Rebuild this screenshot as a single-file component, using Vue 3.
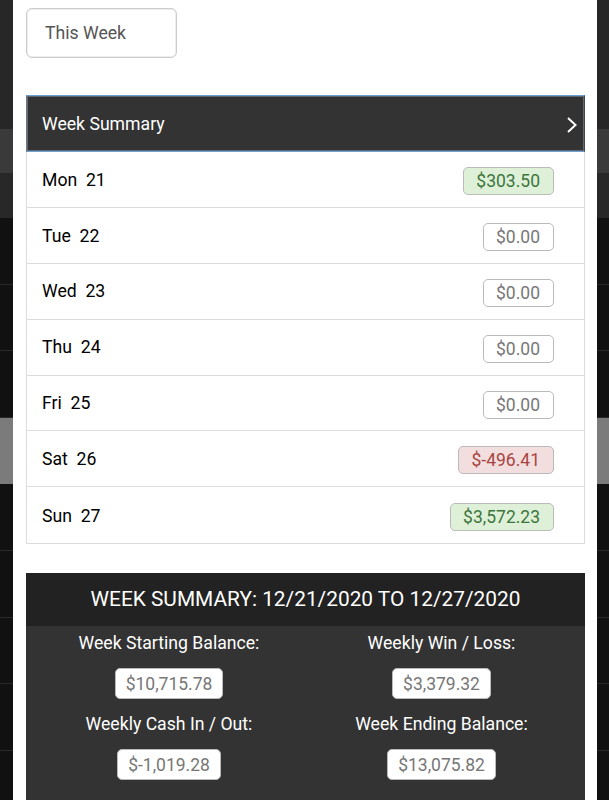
<template>
  <div class="page">
    <div class="backdrop">
      <div v-for="(band, index) in bands" :key="index" class="band" :class="band"></div>
    </div>

    <main class="modal">
      <button class="week-select">This Week</button>

      <section class="days">
        <div class="days-header">
          <span>Week Summary</span>
          <svg class="chevron" width="12" height="18" viewBox="0 0 12 18" fill="none">
            <path d="M2 2L9.5 9L2 16" stroke="#fff" stroke-width="2" />
          </svg>
        </div>
        <div v-for="day in days" :key="day.name" class="day">
          <span class="day-name">{{ day.name }}</span>
          <span class="badge" :class="day.type">{{ day.amount }}</span>
        </div>
      </section>

      <section class="summary">
        <h2 class="summary-title">WEEK SUMMARY: 12/21/2020 TO 12/27/2020</h2>
        <div class="summary-grid">
          <div v-for="item in totals" :key="item.label" class="summary-item">
            <span class="summary-label">{{ item.label }}</span>
            <span class="badge total">{{ item.amount }}</span>
          </div>
        </div>
      </section>
    </main>
  </div>
</template>

<script setup>
const days = [
  { name: 'Mon  21', amount: '$303.50', type: 'win' },
  { name: 'Tue  22', amount: '$0.00' },
  { name: 'Wed  23', amount: '$0.00' },
  { name: 'Thu  24', amount: '$0.00' },
  { name: 'Fri  25', amount: '$0.00' },
  { name: 'Sat  26', amount: '$-496.41', type: 'loss' },
  { name: 'Sun  27', amount: '$3,572.23', type: 'win' }
];

const totals = [
  { label: 'Week Starting Balance:', amount: '$10,715.78' },
  { label: 'Weekly Win / Loss:', amount: '$3,379.32' },
  { label: 'Weekly Cash In / Out:', amount: '$-1,019.28' },
  { label: 'Week Ending Balance:', amount: '$13,075.82' }
];

// Rows of the page behind the modal
const bands = ['top', 'nav', 'sub', 'row', 'row', 'row', 'active', 'row', 'row', 'row', 'row', 'row'];
</script>

<style>
body {
  overflow: hidden;
}
</style>

<style scoped>
.page {
  display: grid;
  height: 800px;
  overflow: hidden;
  font-family: Roboto, sans-serif;
  font-size: 17.65px;
  line-height: 26px;
}

.backdrop,
.modal {
  grid-area: 1 / 1;
  min-height: 0;
}

.backdrop {
  height: 800px;
  overflow: hidden;
  background: #111;
}

.band {
  box-sizing: border-box;
  height: 66.6px;
}

.band.row {
  border-bottom: 1px solid #282828;
}

.band.top {
  height: 129px;
  background: #272727;
}

.band.nav {
  height: 44px;
  background: #3a3a3a;
}

.band.sub {
  height: 45px;
  background: #282828;
}

.band.active {
  background: #7b7b7b;
}

.modal {
  box-sizing: border-box;
  height: 800px;
  margin: 0 12px 0 13px;
  padding: 8px 12px 0 13px;
  overflow: hidden;
  background: #fff;
}

.week-select {
  display: block;
  box-sizing: border-box;
  width: 151px;
  height: 50px;
  padding: 0 0 0 18px;
  border: 1px solid #ccc;
  border-radius: 6px;
  box-shadow: inset 0 0 0 0.5px #ddd;
  background: #fff;
  color: #555;
  font: inherit;
  text-align: left;
}

.days {
  margin: 37px 0 0;
  border: 1px solid #ddd;
  border-top: 0;
  color: #000;
}

.days-header {
  display: flex;
  align-items: center;
  justify-content: space-between;
  box-sizing: border-box;
  height: 57px;
  margin: 0 -1px;
  padding: 0 6px 0 15px;
  border: 1px solid #6ba0d0;
  border-right-color: #444;
  border-left-color: #777;
  box-shadow: inset 0 0 0 1px #5f6a74;
  background: #333;
  color: #fff;
}

.chevron {
  margin-top: 3px;
}

.day {
  display: flex;
  align-items: center;
  justify-content: space-between;
  box-sizing: border-box;
  height: 55.9px;
  padding: 3px 30px 0 15px;
  border-bottom: 1px solid #ddd;
}

.day:last-child {
  border-bottom: 0;
}

.day-name {
  margin-top: -2.5px;
  white-space: pre;
}

.badge {
  box-sizing: border-box;
  height: 28px;
  padding: 0 13px;
  border: 1px solid #bbb;
  border-radius: 5px;
  background: #fff;
  color: #777;
  font-size: 17.5px;
  line-height: 26px;
}

.day .badge {
  padding-left: 12.5px;
}

.badge.win {
  background: #dff0d8;
  color: #3c763d;
}

.badge.loss {
  background: #f2dede;
  color: #a94442;
}

.summary {
  height: 240px;
  margin-top: 29px;
  background: #333;
  color: #fff;
}

.summary-title {
  height: 53px;
  margin: 0;
  background: #222;
  font-size: 20.85px;
  font-weight: 400;
  line-height: 52px;
  text-align: center;
}

.summary-grid {
  display: grid;
  grid-template-columns: 286px 259px;
}

.summary-item {
  display: flex;
  flex-direction: column;
  align-items: center;
  height: 81px;
  padding-top: 4px;
  box-sizing: border-box;
}

.badge.total {
  height: 31px;
  margin-top: 12px;
  padding: 0 10px;
  line-height: 30px;
}
</style>
